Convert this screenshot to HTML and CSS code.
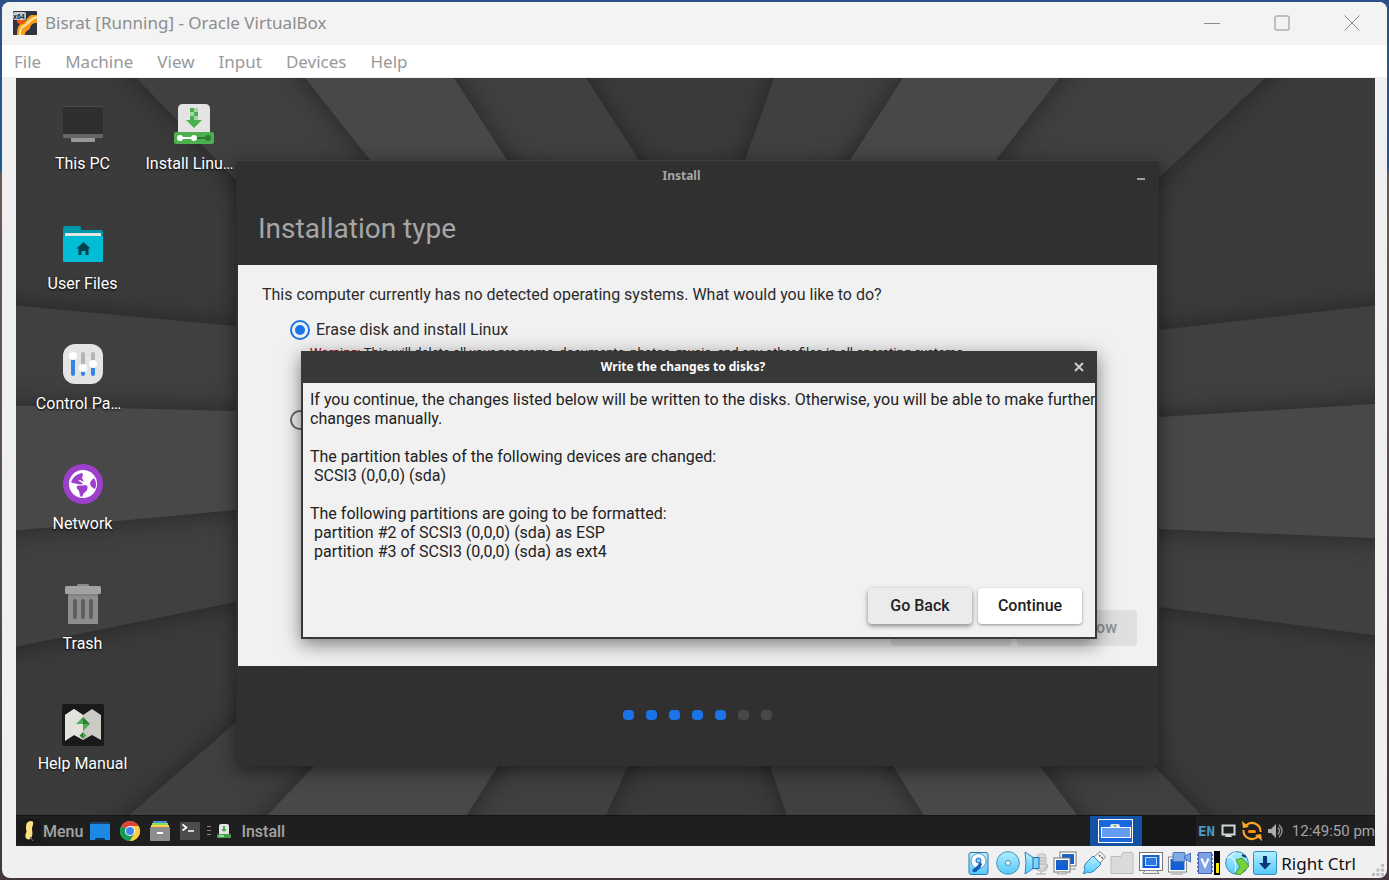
FILE: index.html
```
<!DOCTYPE html>
<html lang="en">
<head>
<meta charset="utf-8">
<title>Bisrat [Running] - Oracle VirtualBox</title>
<link rel="stylesheet" href="styles.css">
</head>
<body>
<div class="vm">
  <header class="titlebar">
    <svg class="app-icon" viewBox="0 0 24 24" aria-hidden="true">
      <rect width="24" height="24" rx="1" fill="#2f3440"/>
      <path d="M4 24c0-7 1-10 5-12 4-1 5-6 9-8h6v8c-5 0-6 2-7 5s-5 2-5 7z" fill="#f79a1d"/>
      <path d="M7 24c0-6 1-8 4-9s5-7 13-9" fill="none" stroke="#ffe08a" stroke-width="2.500"/>
      <ellipse cx="8" cy="10.500" rx="4" ry="2.500" fill="#ee5a12"/>
      <rect x="0" y="1" width="13" height="8" rx="2" fill="#c9ccd2"/>
      <text x="0" y="8" class="badge-text">x64</text>
    </svg>
    <h1 class="vm-title">Bisrat [Running] - Oracle VirtualBox</h1>
    <div class="win-controls">
      <button class="win-btn" aria-label="Minimize"><svg viewBox="0 0 16 16"><path d="M0 8.500h16"/></svg></button>
      <button class="win-btn" aria-label="Maximize"><svg viewBox="0 0 16 16"><rect x="1" y="1" width="14" height="14" rx="1"/></svg></button>
      <button class="win-btn" aria-label="Close"><svg viewBox="0 0 16 16"><path d="M.5.5l15 15M15.500.5l-15 15"/></svg></button>
    </div>
  </header>
  <nav class="menubar">
    <button>File</button><button>Machine</button><button>View</button><button>Input</button><button>Devices</button><button>Help</button>
  </nav>

  <main class="screen">
    <section class="desktop">
      <svg class="wallpaper" viewBox="16 78 1359 737" preserveAspectRatio="none" aria-hidden="true">
        <defs><filter id="cast" color-interpolation-filters="sRGB" filterUnits="userSpaceOnUse" x="-60" y="0" width="1520" height="900"><feDropShadow dx="0" dy="0" stdDeviation="14" flood-color="#202020" flood-opacity=".85"/></filter></defs>
        <rect x="16" y="78" width="1359" height="737" fill="#3b3b3b"/>
        <g fill="#404040" filter="url(#cast)">
          <path d="M95 36L236 180L680 440L639 160L559 36z"/>
          <path d="M789 36L745 160L715 440L1159 178L1310 36z"/>
          <path d="M1440 298L1159 330L740 460L1159 607L1440 644z"/>
          <path d="M1250 865L1154 766L720 500L770 766L804 865z"/>
          <path d="M584 865L628 766L680 500L236 722L72 865z"/>
          <path d="M-44 300L236 326L660 460L236 602L-44 659z"/>
        </g>
        <g fill="#484848" filter="url(#cast)">
          <path d="M272 36L370 160L680 440L507 160L427 36z"/>
          <path d="M930 36L850 160L715 440L996 160L1092 36z"/>
          <path d="M1440 400L1159 417L740 460L1159 529L1440 541z"/>
          <path d="M1115 865L1040 766L720 500L893 766L955 865z"/>
          <path d="M435 865L498 766L680 500L314 766L220 865z"/>
          <path d="M-44 404L236 411L660 460L236 510L-44 536z"/>
        </g>
      </svg>

      <ul class="shortcuts">
        <li class="shortcut">
          <svg viewBox="0 0 40 40"><rect y="2" width="40" height="29" rx="1" fill="#2f2f2f"/><path d="M0 2.500h40" stroke="#4a4a4a"/><path d="M0 30h40v2.500q0 1.500-1.500 1.500h-37Q0 34 0 32.500z" fill="#666"/><path d="M8 34h24v2.500q0 1.500-1.500 1.500h-21Q8 38 8 36.500z" fill="#999"/></svg>
          <span>This PC</span>
        </li>
        <li class="shortcut">
          <svg viewBox="0 0 40 40"><path d="M0 5q0-3 3-3h13q2 0 2 2v2h20q2 0 2 2v10H0z" fill="#0097a7"/><path d="M2 10q0-1 1-1h34q1 0 1 1v5H2z" fill="#e4e4e4"/><rect y="12" width="40" height="26" rx="1" fill="#00bcd4"/><path d="M20.500 18l7 6.500h-2V31h-3v-4h-4v4h-3v-6.500h-2z" fill="#00424b"/></svg>
          <span>User Files</span>
        </li>
        <li class="shortcut">
          <svg viewBox="0 0 40 40"><rect width="40" height="40" rx="12" fill="#e4e4e4"/><g stroke-width="4" stroke-linecap="round"><path d="M20 10v12M30 10v8" stroke="#b4b4b4"/><path d="M10 14v16M20 25v5M30 22v8" stroke="#3584e4"/></g><g fill="#fff"><circle cx="10" cy="12" r="4"/><circle cx="20" cy="24" r="4"/><circle cx="30" cy="20" r="4"/></g></svg>
          <span class="cut">Control Pa…</span>
        </li>
        <li class="shortcut">
          <svg viewBox="0 0 40 40"><circle cx="20" cy="20" r="20" fill="#9c3fcb"/><circle cx="20" cy="20" r="14" fill="#fff"/><path d="M19 9c-5 1-9 4-11 9 2 2 4 1 6 2 2 0 4 1 6 0l-2-2-3-1 2-1 4 2-2-4 1-3zM14 22c2-1 5 0 8-1 3 0 3 3 2 5s-3 2-4 5l-1 2c-3-1-2-4-3-6s-3-2-2-5zM31 14c2 3 3 7 1 11-3-1-4-3-5-5 0-3 2-4 4-6z" fill="#9c3fcb"/></svg>
          <span>Network</span>
        </li>
        <li class="shortcut">
          <svg viewBox="0 0 40 40"><rect x="14" width="12" height="5" rx="1" fill="#8a8a8a"/><path d="M5 8h30v31q0 1-1 1H6q-1 0-1-1z" fill="#8e8e8e"/><path d="M5 11h30" stroke="#777"/><rect x="2" y="2" width="36" height="8" rx="1.500" fill="#a2a2a2"/><path d="M12 17v16M20 17v16M28 17v16" stroke="#5f5f5f" stroke-width="4" stroke-linecap="round"/></svg>
          <span>Trash</span>
        </li>
        <li class="shortcut">
          <svg viewBox="0 0 40 40" overflow="visible"><rect x="-1" y="0" width="42" height="42" rx="2" fill="#191919"/><path d="M2 11l9-6 9 6v20l-9 0-9 6z" fill="#e6e5df"/><path d="M2 36l9-5 9 5V11l-9-6-9 6z" fill="#e3e2dc"/><path d="M20 11l9-6 9 6v25l-9-5-9 5z" fill="#cbcac5"/><path d="M20 13v7h-7z" fill="#4caf50"/><path d="M20 13l7 7h-7z" fill="#2e7d32"/><path d="M20 20h7l-7 7zM20 28l3.500 3.500L20 35z" fill="#4caf50"/><path d="M20 28l-3.500 3.500L20 35z" fill="#2e7d32"/></svg>
          <span>Help Manual</span>
        </li>
        <li class="shortcut second-col">
          <svg viewBox="0 0 40 40"><path d="M4 5q0-5 5-5h22q5 0 5 5v24H4z" fill="#e4e4e4"/><path d="M16 4h8v12h4l-8 8-8-8h4z" fill="#4caf50"/><path d="M20 4h4v4h-4zM16 8h4v4h-4zM20 12h4v4h-4z" fill="#a5d6a7"/><rect y="28" width="40" height="12" rx="2" fill="#4caf50"/><path d="M20 34h14" stroke="#2e7d32" stroke-width="2"/><circle cx="34" cy="34" r="3" fill="#2e7d32"/><path d="M6 34h14" stroke="#fff" stroke-width="2"/><circle cx="6" cy="34" r="3" fill="#fff"/><circle cx="20" cy="34" r="3" fill="#fff"/></svg>
          <span class="cut">Install Linu…</span>
        </li>
      </ul>

      <section class="installer">
        <header class="installer-bar">
          <h2>Install</h2>
          <button class="min-btn" aria-label="Minimize installer"></button>
        </header>
        <h3 class="installer-heading">Installation type</h3>
        <form class="installer-page">
          <p class="question">This computer currently has no detected operating systems. What would you like to do?</p>
          <label class="choice"><input type="radio" name="kind" checked>Erase disk and install Linux</label>
          <p class="hint"><em>Warning:</em> This will delete all your programs, documents, photos, music, and any other files in all operating systems.</p>
          <div class="choice"><input type="radio" name="kind" aria-label="Something else"></div>
          <div class="page-actions">
            <button type="button" aria-label="Back" disabled></button>
            <button type="button" disabled>Install Now</button>
          </div>
        </form>
        <footer class="steps"><i class="on"></i><i class="on"></i><i class="on"></i><i class="on"></i><i class="on"></i><i></i><i></i></footer>
      </section>

      <section class="dialog" role="dialog" aria-labelledby="dialog-title">
        <header class="dialog-bar">
          <h2 id="dialog-title">Write the changes to disks?</h2>
          <button class="close-btn" aria-label="Close dialog"><svg viewBox="0 0 10 10"><path d="M1 1l8 8M9 1l-8 8"/></svg></button>
        </header>
        <div class="dialog-text">If you continue, the changes listed below will be written to the disks. Otherwise, you will be able to make further
changes manually.

The partition tables of the following devices are changed:
 SCSI3 (0,0,0) (sda)

The following partitions are going to be formatted:
 partition #2 of SCSI3 (0,0,0) (sda) as ESP
 partition #3 of SCSI3 (0,0,0) (sda) as ext4</div>
        <div class="dialog-actions">
          <button class="back">Go Back</button>
          <button class="go">Continue</button>
        </div>
      </section>
    </section>

    <footer class="taskbar">
      <button class="start"><svg viewBox="0 0 24 24" width="24" height="24"><rect width="24" height="24" fill="#191919"/><path d="M11 3c3-2 6-1 5 2 0 2-1 3-1 5s1 4 0 7-3 4-5 3-2-4-1-6 0-3 0-5 0-5 2-6z" fill="#ffe082"/><path d="M13 18l3 4" stroke="#777"/></svg>Menu</button>
      <div class="launchers">
        <button aria-label="Show desktop"><svg viewBox="0 0 20 20"><path d="M0 2h20v17h-5l-1-2H6l-1 2H0z" fill="#1e88e5"/><path d="M0 1h20v2H0z" fill="#1c3f6b"/><path d="M6 17h8l1 2H5z" fill="#123a66"/></svg></button>
        <button aria-label="Chrome"><svg viewBox="0 0 20 20"><circle cx="10" cy="10" r="10" fill="#fbc934"/><path d="M10 10L1.340 5A10 10 0 0 1 18.660 5z" fill="#db4437"/><path d="M10 10L1.340 5A10 10 0 0 0 10 20l4.300-7.500z" fill="#0f9d58"/><path d="M10 5h8.660A10 10 0 0 1 10 20l4.300-7.500z" fill="#fdd03b"/><circle cx="10" cy="10" r="5" fill="#fff"/><circle cx="10" cy="10" r="4" fill="#4285f4"/></svg></button>
        <button aria-label="Files"><svg viewBox="0 0 20 20"><path d="M3 0h14v3H3z" fill="#4a90d9"/><path d="M2 2h16v3H2z" fill="#8bdc5c"/><path d="M1 4h18v3H1z" fill="#ffd042"/><rect y="6" width="20" height="14" rx="1" fill="#8e8e8e"/><path d="M7 12h6" stroke="#fff" stroke-width="2"/></svg></button>
        <button aria-label="Terminal"><svg viewBox="0 0 20 20"><rect y="1" width="20" height="18" rx="1" fill="#4c4c4c"/><path d="M2.500 3.500l4 3-4 3M8 10h6" fill="none" stroke="#fff" stroke-width="1.600"/></svg></button>
      </div>
      <span class="handle"></span>
      <button class="task"><svg viewBox="0 0 14 14"><path d="M2 2q0-2 2-2h6q2 0 2 2v8H2z" fill="#e4e4e4"/><path d="M6 2h2v3h2L7 8 4 5h2z" fill="#4caf50"/><rect y="10" width="14" height="4" rx="1" fill="#43a047"/><path d="M2 12h5" stroke="#fff"/></svg>Install</button>
      <button class="pager" aria-label="Workspace 1"><svg viewBox="0 0 35 24"><rect x=".5" y=".5" width="34" height="23" fill="#1967dc" stroke="#fff"/><path d="M12 8q0-3 2-3h6q2 0 2 3z" fill="#d8e2e8"/><circle cx="17" cy="7" r="1" fill="#4caf50"/><rect x="3.500" y="8.500" width="29" height="10" fill="#629df2" stroke="#fff"/></svg></button>
      <span class="pager-gap"></span>
      <div class="tray">
        <span class="lang">EN</span>
        <svg viewBox="0 0 15 14" width="15" height="14"><path d="M1.500 1.500h12v9h-12z" fill="none" stroke="#cfd8dc" stroke-width="2"/><path d="M4 13h7l-1-2H5z" fill="#cfd8dc"/></svg>
        <svg viewBox="0 0 20 20" width="20" height="20"><g fill="none" stroke="#ffa726" stroke-width="2"><path d="M4 4.500A8.500 8.500 0 0 1 18.500 11M16 15.500A8.500 8.500 0 0 1 1.500 9"/></g><path d="M0 0l1 7 6-1zM20 20l-1-7-6 1z" fill="#ffa726"/><path d="M7.500 10.500h5" stroke="#ff9100" stroke-width="3" stroke-linecap="round"/></svg>
        <svg viewBox="0 0 16 14" width="16" height="14"><path d="M0 5h3l5-5v14L3 9H0z" fill="#aaa"/><path d="M10 3.500q3 3.500 0 7M11 .8q6 6.200 0 12.400" fill="none" stroke="#999" stroke-width="1.300"/></svg>
        <time>12:49:50 pm</time>
      </div>
    </footer>
  </main>

  <footer class="statusbar">
    <svg width="0" height="0" class="defs" aria-hidden="true"><defs>
      <linearGradient id="sky" x1="0" y1="0" x2="0" y2="1"><stop offset="0" stop-color="#b4efff"/><stop offset="1" stop-color="#55c8fb"/></linearGradient>
      <linearGradient id="deep" x1="0" y1="0" x2="0" y2="1"><stop offset="0" stop-color="#1f63c0"/><stop offset="1" stop-color="#0b5be0"/></linearGradient>
    </defs></svg>
    <div class="indicators">
      <svg viewBox="0 0 24 24"><rect x="2" y="1.500" width="19" height="22" rx="2" fill="url(#sky)" stroke="#2f78ad"/><circle cx="11.500" cy="10" r="7.500" fill="#f6fbfd" stroke="#5a9cc4"/><circle cx="11.500" cy="9.500" r="2.500" fill="#8cc9ee" stroke="#1469c4"/><path d="M13 11q-2 4-8 8l1 2q3 1 5-2 3-2 4-6z" fill="#145cb8"/></svg>
      <svg viewBox="0 0 24 24"><circle cx="12" cy="12" r="11.300" fill="url(#sky)" stroke="#3f94be"/><circle cx="12" cy="12" r="2.500" fill="#fff" stroke="#3b88b0"/></svg>
      <svg viewBox="0 0 24 24"><rect x="13" y="3" width="9" height="15" rx="3" fill="#dcdcdc" stroke="#bbb"/><path d="M10.500 14q1 6 7 6t6-7M17 20v3M12 23h10M15 7h6M15 10h6M15 13h6" fill="none" stroke="#bdbdbd" stroke-width="1.500"/><path d="M1 1l9 6v10l-9 6q2-11 0-22z" fill="url(#sky)" stroke="#2f87c4"/><rect x="9" y="6.500" width="6" height="11" fill="#79d3fa" stroke="#1d6fae"/></svg>
      <svg viewBox="0 0 24 24"><rect x="7" y="1" width="16" height="14" fill="#fff" stroke="#777"/><rect x="9" y="3" width="12" height="10" fill="url(#deep)"/><path d="M17 18h6" stroke="#999"/><rect x="1" y="7" width="16" height="14" fill="#fff" stroke="#777"/><rect x="3" y="9" width="12" height="10" fill="url(#deep)"/><path d="M4 23h10l-1-2H5z" fill="#ddd" stroke="#888" stroke-width=".6"/></svg>
      <svg viewBox="0 0 24 24"><path d="M12 6l6-5.500L23.500 6 18 12z" fill="#f8f8f8" stroke="#888"/><path d="M17 4l1.500 1.500M19.500 6l1.500 1.500" stroke="#666" stroke-width="1.600"/><path d="M11 5l8 8-7 7q-4 3-7 1l-3 2-1-1 2-3q-2-3 1-7z" fill="url(#sky)" stroke="#2d84bd"/></svg>
      <svg viewBox="0 0 24 24"><path d="M1 22.500v-17h10l2-4h9l1 2v19z" fill="#dadada" stroke="#bcbcbc"/></svg>
      <svg viewBox="0 0 24 24"><rect x=".5" y="1.500" width="23" height="18" fill="#fff" stroke="#777"/><rect x="3.500" y="4" width="17" height="13" fill="url(#deep)"/><rect x="6.500" y="6.500" width="11" height="8" fill="#2a78e0" stroke="#b6ddff"/><path d="M4 22.500h16l-2-3H6z" fill="#eee" stroke="#888"/></svg>
      <svg viewBox="0 0 24 24"><rect x="1.500" y="6" width="18" height="15" fill="#fff" stroke="#888"/><rect x="3.500" y="8" width="14" height="11" fill="url(#deep)"/><path d="M4 23h12" stroke="#999"/><rect x="6" y="1.500" width="12" height="9" rx="1" fill="#80a9e8" stroke="#4671b8"/><path d="M18 5l5.500-3v9L18 8z" fill="#80a9e8" stroke="#4671b8"/></svg>
      <svg viewBox="0 0 24 24"><path d="M1 4h16M1 8h16M1 12h16M1 16h16M1 20h16" stroke="#5c78c8" stroke-width="2"/><rect x="2.500" y="1.500" width="13" height="21" fill="#7fa2e4" stroke="#4865b8"/><path d="M5.500 7.500l3.500 8 3.500-8" fill="none" stroke="#fff" stroke-width="2"/><rect x="18" y="0" width="6" height="24" fill="#000"/><rect x="20" y="12" width="3" height="10" fill="#ffeb00"/></svg>
      <svg viewBox="0 0 24 24"><circle cx="12" cy="12" r="11.300" fill="url(#sky)" stroke="#2d8ec4"/><path d="M4 5q9 3 6 17M10 1q-4 4-8 6" fill="none" stroke="#fff"/><path d="M11 9l6-2 7 8-9 9-5-2 5-6z" fill="#76d13c" stroke="#4a9d27"/><path d="M17 4l4 2" stroke="#24406c" stroke-width="2"/></svg>
      <svg viewBox="0 0 24 24"><rect x=".5" y=".5" width="23" height="23" rx="2" fill="url(#sky)" stroke="#2c8bc1"/><path d="M10 5h4v7h4l-6 6.500L6 12h4z" fill="#04367c"/></svg>
    </div>
    <span class="host-key">Right Ctrl</span>
    <svg class="grip" viewBox="0 0 12 12"><path d="M9 0h3v3H9zM9 4.500h3v3H9zM9 9h3v3H9zM4.500 4.500h3v3h-3zM4.500 9h3v3h-3zM0 9h3v3H0z" fill="#bcbcbc"/></svg>
  </footer>
</div>
</body>
</html>
```
FILE: styles.css
```
* { box-sizing: border-box; }

body {
  margin: 0;
  padding: 2px;
  height: 100vh;
  background: linear-gradient(#2d4f88, #1f5799 19%, #6a5a50 20%, #5a4c58 60%, #44363f);
  font-family: Roboto, "Liberation Sans", sans-serif;
  font-size: 16px;
}

h1, h2, h3, p, ul { margin: 0; padding: 0; font-size: inherit; font-weight: inherit; }
button { border: 0; padding: 0; background: none; font: inherit; color: inherit; }
svg { display: block; }

.vm {
  display: flex;
  flex-direction: column;
  height: 100%;
  border-radius: 8px;
  overflow: hidden;
  background: #f0f0f0;
}

/* Host window chrome */
.titlebar {
  display: flex;
  align-items: center;
  height: 43px;
  flex: none;
  padding: 0 0 2px 11px;
  background: #f3f3f3;
  color: #8c8c8c;
  font-family: "Noto Sans", sans-serif;
}
.app-icon { width: 24px; height: 24px; }
.badge-text { font: bold 7px "Liberation Sans", sans-serif; fill: #222; }
.vm-title { flex: 1; margin-left: 8px; font-size: 17px; }
.win-controls { display: flex; }
.win-btn { display: grid; place-items: center; width: 70px; height: 41px; }
.win-btn svg { width: 16px; height: 16px; fill: none; stroke: #8c8c8c; stroke-width: 1; }

.menubar {
  display: flex;
  gap: 24px;
  height: 33px;
  flex: none;
  padding-left: 12px;
  background: #fff;
  border-bottom: 1px solid #f0f0f0;
  color: #999;
  font-family: "Noto Sans", sans-serif;
  font-size: 17px;
}

.screen { display: flex; flex-direction: column; flex: 1; margin: 0 12px 0 14px; min-height: 0; }
.desktop { position: relative; flex: 1; overflow: hidden; background: #3b3b3b; }
.wallpaper { position: absolute; inset: 0; width: 100%; height: 100%; }

.shortcuts {
  position: relative;
  display: grid;
  grid-template-columns: 111px 111px;
  grid-auto-rows: 120px;
  padding: 26px 0 0 11px;
  list-style: none;
  color: #fff;
  line-height: 20px;
  text-shadow: 0 1px 2px #000;
}
.shortcut { grid-column: 1; display: flex; flex-direction: column; align-items: center; gap: 10px; }
.shortcut svg { width: 40px; height: 40px; }
.shortcut .cut { padding-right: 8px; }
.second-col { grid-column: 2; grid-row: 1; }

/* Installer window */
.installer {
  position: absolute;
  left: 220px;
  top: 82px;
  width: 923px;
  display: flex;
  flex-direction: column;
  padding: 0 2px;
  background: #303030;
  border-top: 1px solid #3f3f3f;
  box-shadow: 0 4px 18px rgba(0, 0, 0, .5);
  color: #a6a6a6;
}
.installer-bar, .dialog-bar {
  display: flex;
  align-items: center;
  height: 30px;
  font: bold 12px/16px "Noto Sans", sans-serif;
  text-align: center;
}
.installer-bar h2, .dialog-bar h2 { flex: 1; }
.min-btn { width: 32px; height: 30px; display: grid; place-items: center; }
.min-btn::before { content: ""; width: 8px; height: 2px; margin-top: 6px; background: #a0a0a0; }
.installer-heading { height: 74px; padding: 19px 20px 0; font-size: 28px; line-height: 38px; }
.installer-page {
  display: flex;
  flex-direction: column;
  height: 401px;
  padding: 20px 20px 20px 24px;
  background: #f1f1f1;
  color: #2b2b2b;
  line-height: 20px;
}
.choice { display: flex; align-items: center; gap: 6px; margin: 15px 0 0 28px; }
.choice input {
  appearance: none;
  display: grid;
  place-items: center;
  width: 20px;
  height: 20px;
  margin: 0;
  border: 2px solid #666;
  border-radius: 50%;
}
.choice input:checked { border-color: #1a73e8; }
.choice input:checked::before { content: ""; width: 10px; height: 10px; border-radius: 50%; background: #1a73e8; }
.hint { margin: 3px 0 32px 48px; font-size: 13px; }
.hint em { color: #b00000; font-style: normal; }
.page-actions { display: flex; justify-content: flex-end; gap: 6px; margin-top: auto; }
.page-actions button {
  width: 120px;
  height: 36px;
  border-radius: 4px;
  background: #dfdfdf;
  color: #909090;
  font-weight: 500;
}
.steps { display: flex; justify-content: center; align-items: center; gap: 12px; height: 100px; padding-bottom: 2px; }
.steps i { width: 11px; height: 10px; border-radius: 4px; background: #484848; }
.steps .on { background: #1a73e8; }

/* Confirmation dialog */
.dialog {
  position: absolute;
  left: 285px;
  top: 273px;
  width: 796px;
  border: 2px solid #383838;
  border-top: 0;
  background: #f1f1f1;
  box-shadow: 0 5px 18px rgba(0, 0, 0, .5);
  color: #222;
}
.dialog-bar { height: 32px; background: #383838; color: #fff; }
.close-btn { display: grid; place-items: center; width: 32px; height: 32px; }
.close-btn svg { width: 10px; height: 10px; stroke: #ccc; stroke-width: 2; }
.dialog-text { padding: 7px 0 27px 7px; line-height: 19px; white-space: pre; }
.dialog-actions { display: flex; justify-content: flex-end; gap: 6px; padding: 0 13px 13px; }
.dialog-actions button {
  width: 104px;
  height: 36px;
  padding-bottom: 2px;
  border-radius: 4px;
  font-weight: 500;
  background: #fff;
  box-shadow: 0 1px 3px rgba(0, 0, 0, .4);
}
.dialog-actions .back { background: #ebebeb; box-shadow: 0 2px 5px rgba(0, 0, 0, .45); }

/* Guest taskbar */
.taskbar {
  display: flex;
  align-items: center;
  height: 31px;
  flex: none;
  border-top: 1px solid #141414;
  background: #1f1f1f;
  color: #a4a4a4;
}
.start { display: flex; align-items: center; gap: 2px; padding-left: 1px; font-weight: 500; }
.launchers { display: flex; gap: 10px; margin-left: 7px; }
.launchers svg { width: 20px; height: 20px; }
.handle { width: 4px; height: 10px; margin: 0 6px 0 7px; background: repeating-linear-gradient(#888 0 1px, transparent 1px 4px); }
.task { display: flex; align-items: center; gap: 10px; font-weight: 500; }
.task svg { width: 14px; height: 14px; }
.pager { display: grid; place-items: center; width: 52px; height: 30px; margin-left: auto; background: #1451a3; }
.pager svg { width: 35px; height: 24px; }
.pager-gap { width: 54px; height: 30px; background: #161616; }
.tray { display: flex; align-items: center; gap: 6px; padding-left: 2px; white-space: nowrap; }
.tray time { margin-left: 2px; font-size: 15px; }
.lang { color: #4a9cc4; font: bold 14px "DejaVu Sans Mono", monospace; }

/* Host status bar */
.statusbar { display: flex; align-items: center; justify-content: flex-end; height: 32px; flex: none; padding: 2px 3px 0 0; }
.defs { position: absolute; }
.indicators { display: flex; justify-content: space-between; width: 310px; }
.indicators svg { width: 24px; height: 24px; }
.host-key { margin: 0 16px 0 4px; color: #111; font: 17px "Noto Sans", sans-serif; white-space: nowrap; }
.grip { width: 12px; height: 12px; margin-top: 14px; }
```
